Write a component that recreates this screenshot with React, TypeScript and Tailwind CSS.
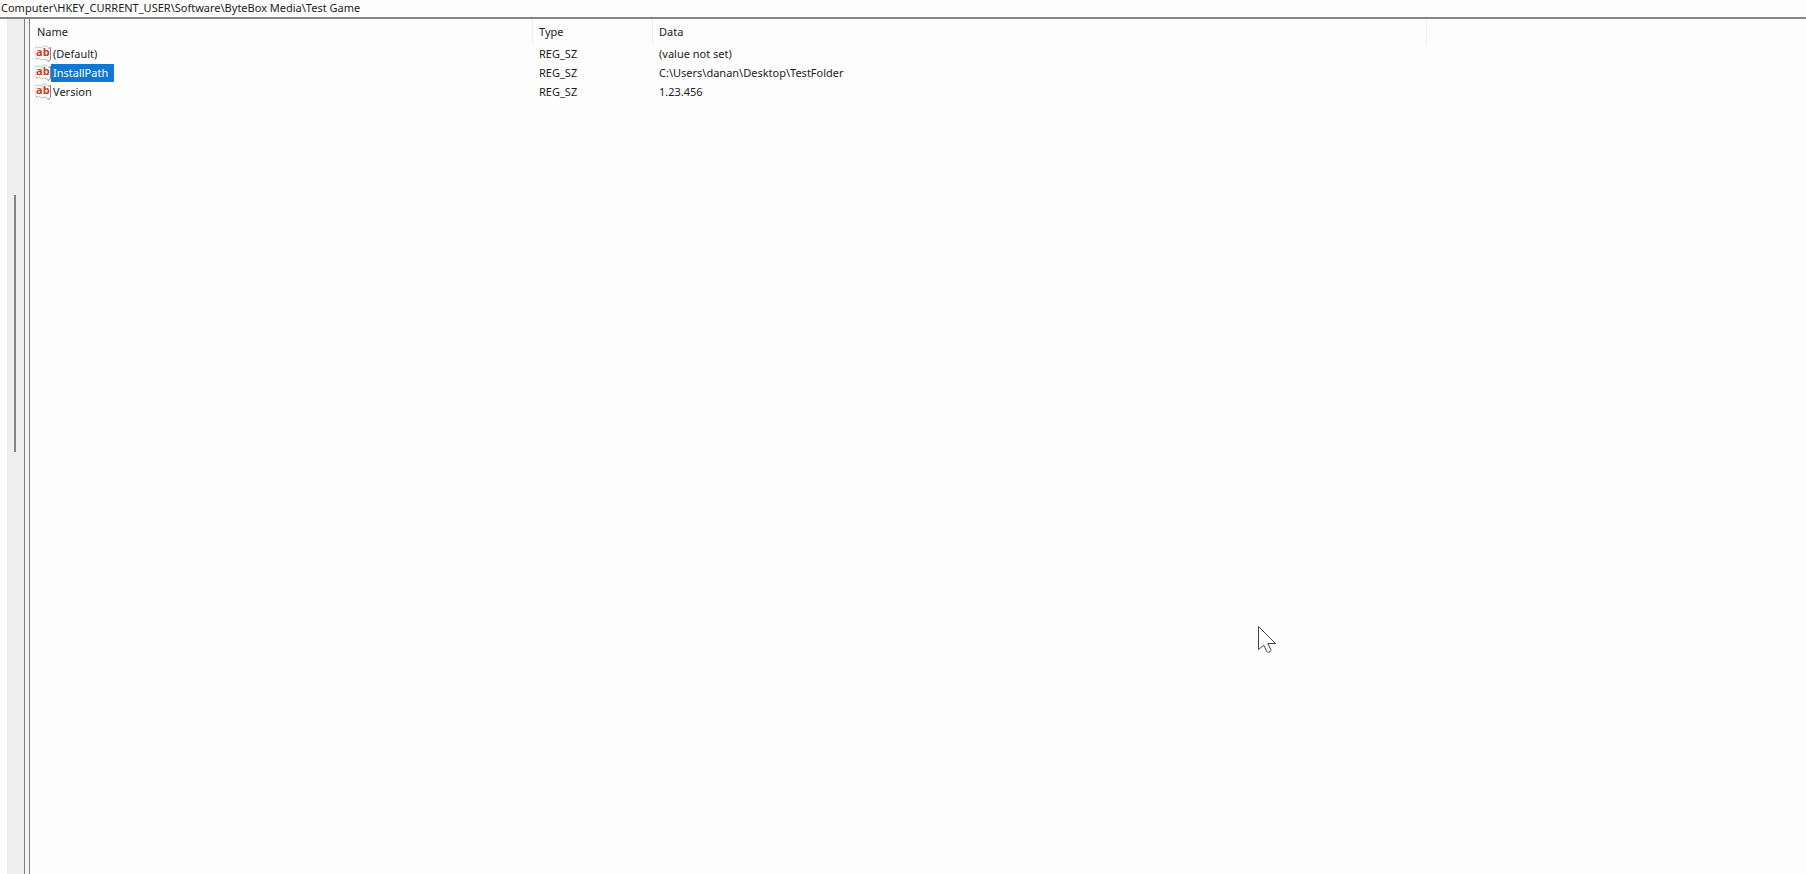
const values = [
  { name: "(Default)", type: "REG_SZ", data: "(value not set)" },
  { name: "InstallPath", type: "REG_SZ", data: "C:\\Users\\danan\\Desktop\\TestFolder", selected: true },
  { name: "Version", type: "REG_SZ", data: "1.23.456" },
];

function StringValueIcon() {
  return (
    <svg className="w-4 h-[18px] shrink-0" viewBox="0 0 16 18" fill="none" aria-hidden="true">
      <path d="M1 3 3.500 2 6 3 9 1.500l3 .5 1.500 1.500L15.500 2.500v12L13 16.500l-1.500-2L8 15l-3-1-4 .5z" fill="#fdfdfd" />
      <path d="M.5 3.500v-1l3-.5 2.500 1L9 1l3 .5 1.500 1.500" stroke="#c6c6c6" />
      <path d="M.5 3v11" stroke="#e6e6e6" />
      <path d="M1 14l3.500-.5 2 1.500 2.500-1 2.500.5 1.500 2" stroke="#999" strokeDasharray="2 1" />
      <path d="M13.500 3.500 15.500 2.500v12L13 16.500" stroke="#888" />
      <text x="1" y="11" fontSize="11" fontWeight="700" fontFamily="Open Sans, sans-serif" fill="#d13a1c">
        ab
      </text>
    </svg>
  );
}

function MousePointer() {
  return (
    <svg
      className="absolute left-[1257px] top-[625px] w-5 h-8 pointer-events-none"
      viewBox="0 0 20 32"
      aria-hidden="true"
    >
      <path
        d="M1.500 1.500v23l5.200-4.300 3.200 6.300q.6 1.200 1.800.7l1.600-.8q1-.6.500-1.700l-3-6.200h7.700z"
        fill="#fff"
        stroke="#444"
        strokeLinejoin="round"
      />
    </svg>
  );
}

export default function App() {
  return (
    <div className="relative min-h-screen flex flex-col bg-[#fdfdfd] text-[#1c1c1c] text-[11px] leading-4 font-['Noto_Sans','Open_Sans',sans-serif]">
      <input
        aria-label="Address"
        className="w-full h-[19px] px-px pb-0.5 border-b-2 border-[#858585] bg-[#fdfdfd] outline-none"
        defaultValue="Computer\HKEY_CURRENT_USER\Software\ByteBox Media\Test Game"
      />

      <div className="flex flex-1">
        {/* edge of the key tree with its scrollbar */}
        <aside className="flex shrink-0 w-[25px] border-r border-[#808080] pl-[7px]">
          <div className="flex-1 bg-[#eeeeee] pt-44 pl-[7px]">
            <div className="w-0.5 h-[257px] bg-[#858585]" />
          </div>
        </aside>
        <div className="w-1 shrink-0 bg-[#f4f4f4]" />

        <main className="flex-1 border-l border-[#808080]">
          <table className="w-full table-fixed border-separate border-spacing-0 text-left">
            <colgroup>
              <col className="w-[503px]" />
              <col className="w-[120px]" />
              <col className="w-[774px]" />
              <col />
            </colgroup>
            <thead>
              <tr className="h-[25px]">
                <th className="font-normal pl-[7px] border-r border-[#ededed]">Name</th>
                <th className="font-normal pl-1.5 border-r border-[#ededed]">Type</th>
                <th className="font-normal pl-1.5 border-r border-[#f2f2f2]">Data</th>
                <td />
              </tr>
            </thead>
            <tbody>
              {values.map((value) => (
                <tr key={value.name} className="h-[19px]">
                  <td className="p-0 pl-[5px]">
                    <div className="flex items-center">
                      <StringValueIcon />
                      <span
                        className={
                          value.selected
                            ? "h-[18px] leading-[18px] bg-[#0f78d4] text-white pl-0.5 pr-1.5"
                            : "h-[18px] leading-[18px] pl-0.5"
                        }
                      >
                        {value.name}
                      </span>
                    </div>
                  </td>
                  <td className="p-0 pl-1.5">{value.type}</td>
                  <td className="p-0 pl-1.5">{value.data}</td>
                  <td className="p-0" />
                </tr>
              ))}
            </tbody>
          </table>
        </main>
      </div>

      <MousePointer />
    </div>
  );
}
